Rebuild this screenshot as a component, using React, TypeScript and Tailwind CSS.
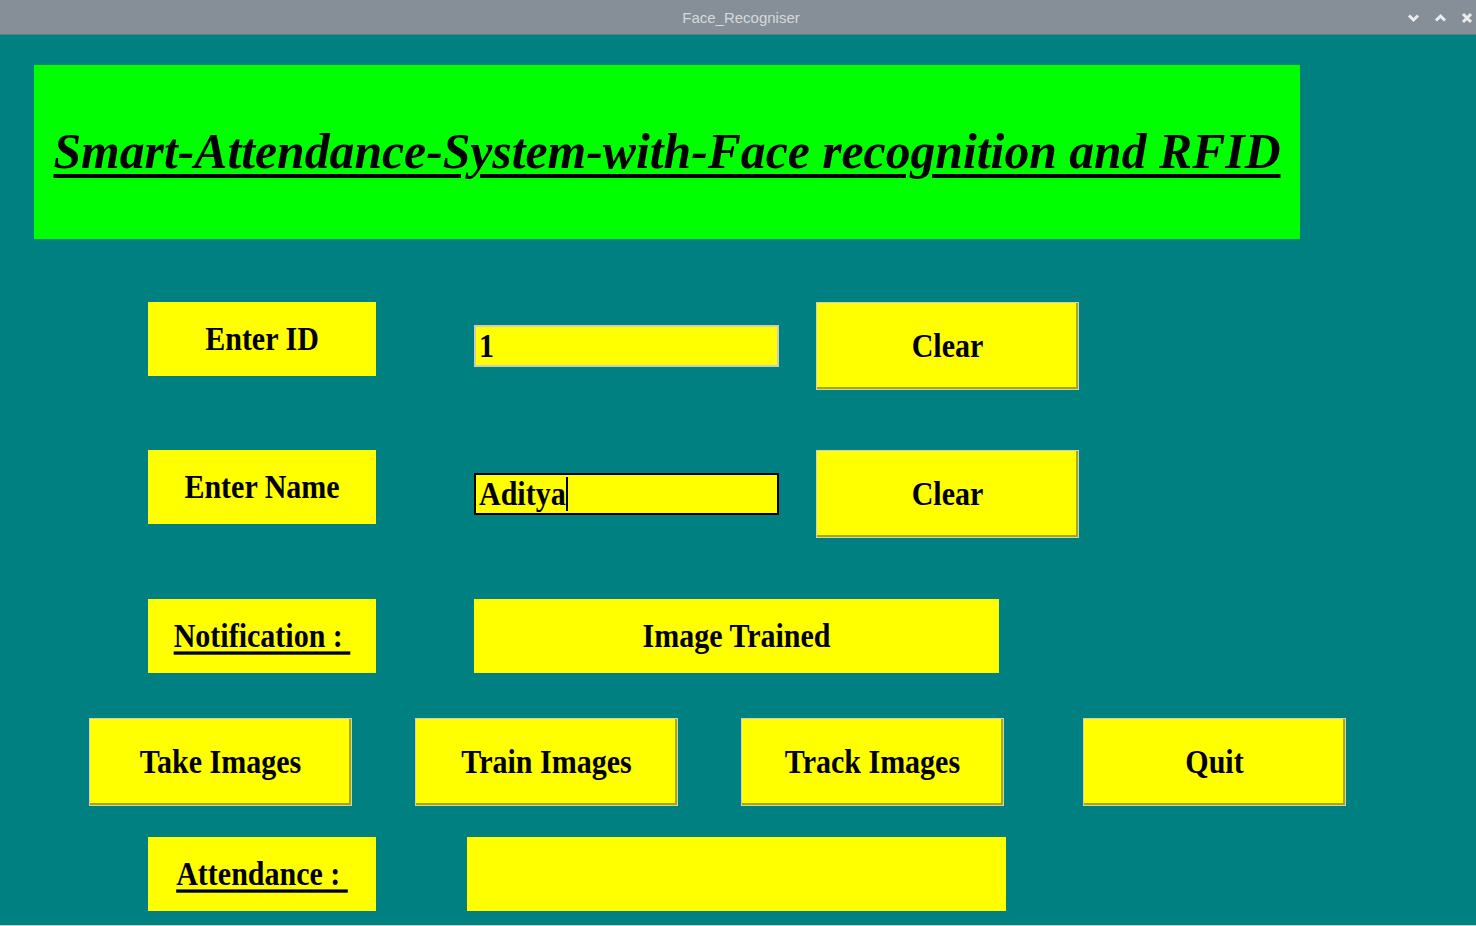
import React from 'react';

const serif = { fontFamily: '"Liberation Serif", "Times New Roman", serif' };

const Label: React.FC<{ text: string; underline?: boolean }> = ({ text, underline }) => (
  <div className="w-[228px] h-[74px] bg-[#ffff00] flex items-center justify-center shrink-0">
    <span
      className={
        'inline-block scale-y-[1.1] text-[30px] font-bold text-black leading-none whitespace-pre ' +
        (underline ? 'underline decoration-[3px] underline-offset-[4px]' : '')
      }
    >
      {text}
    </span>
  </div>
);

const RaisedButton: React.FC<{ text: string; className?: string }> = ({ text, className }) => (
  <div
    className={
      'w-[263px] h-[88px] bg-[#ffff00] border border-[#cfcfcf] shadow-[inset_-2px_-2px_0_#a9a900] flex items-center justify-center shrink-0 ' +
      (className ?? '')
    }
  >
    <span className="inline-block scale-y-[1.1] text-[30px] font-bold text-black leading-none">{text}</span>
  </div>
);

const Entry: React.FC<{ value: string; focused?: boolean }> = ({ value, focused }) => (
  <div
    className={
      'w-[305px] h-[42px] bg-[#ffff00] border-2 flex items-center pl-[3px] shrink-0 mt-[23px] ' +
      (focused ? 'border-black' : 'border-[#cdcdb8]')
    }
  >
    <span className="inline-block scale-y-[1.1] text-[30px] font-bold text-black leading-none">{value}</span>
    {focused && <span className="w-[2px] h-[34px] bg-black" />}
  </div>
);

export default function App() {
  return (
    <div className="w-[1476px] h-[926px] bg-[#008080] flex flex-col overflow-hidden" style={serif}>
      {/* window title bar */}
      <div className="h-[35px] bg-[#868f97] border-b border-[#5f7c80] flex items-center relative shrink-0">
        <div
          className="flex-1 text-center text-[15px] text-[#d6d9dc] pt-[2px] pl-[6px]"
          style={{ fontFamily: '"Liberation Sans", Arial, sans-serif' }}
        >
          Face_Recogniser
        </div>
        <div className="absolute right-[3px] top-[12px] flex items-center gap-[14px]">
          <svg width="13" height="10" viewBox="0 0 13 10">
            <path d="M2 2.5 L6.5 7 L11 2.5" stroke="#ececec" strokeWidth="3" fill="none" />
          </svg>
          <svg width="13" height="10" viewBox="0 0 13 10">
            <path d="M2 7.5 L6.5 3 L11 7.5" stroke="#ececec" strokeWidth="3" fill="none" />
          </svg>
          <svg width="12" height="12" viewBox="0 0 12 12">
            <path d="M2 2 L10 10 M10 2 L2 10" stroke="#ececec" strokeWidth="3" fill="none" />
          </svg>
        </div>
      </div>

      {/* heading */}
      <div className="mt-[30px] ml-[34px] w-[1266px] h-[174px] bg-[#00ff00] flex items-center justify-center shrink-0">
        <span className="text-[49.7px] font-bold italic text-black leading-none underline decoration-[4px] underline-offset-[6px]">
          Smart-Attendance-System-with-Face recognition and RFID
        </span>
      </div>

      {/* ID row */}
      <div className="mt-[63px] flex items-start">
        <div className="ml-[148px]">
          <Label text="Enter ID" />
        </div>
        <div className="ml-[98px]">
          <Entry value="1" />
        </div>
        <RaisedButton text="Clear" className="ml-[37px]" />
      </div>

      {/* Name row */}
      <div className="mt-[60px] flex items-start">
        <div className="ml-[148px]">
          <Label text="Enter Name" />
        </div>
        <div className="ml-[98px]">
          <Entry value="Aditya" focused />
        </div>
        <RaisedButton text="Clear" className="ml-[37px]" />
      </div>

      {/* Notification row */}
      <div className="mt-[61px] flex items-start">
        <div className="ml-[148px]">
          <Label text={'Notification :\u00a0'} underline />
        </div>
        <div className="ml-[98px] w-[525px] h-[74px] bg-[#ffff00] flex items-center justify-center">
          <span className="inline-block scale-y-[1.1] text-[30px] font-bold text-black leading-none">Image Trained</span>
        </div>
      </div>

      {/* action buttons */}
      <div className="mt-[45px] flex items-start">
        <RaisedButton text="Take Images" className="ml-[89px] h-[87px]" />
        <RaisedButton text="Train Images" className="ml-[63px] h-[87px]" />
        <RaisedButton text="Track Images" className="ml-[63px] h-[87px]" />
        <RaisedButton text="Quit" className="ml-[79px] h-[87px]" />
      </div>

      {/* Attendance row */}
      <div className="mt-[31px] flex items-start">
        <div className="ml-[148px]">
          <Label text={'Attendance :\u00a0'} underline />
        </div>
        <div className="ml-[91px] w-[539px] h-[74px] bg-[#ffff00]" />
      </div>

      <div className="mt-auto h-[1px] bg-[#bcd4d4]" />
    </div>
  );
}
